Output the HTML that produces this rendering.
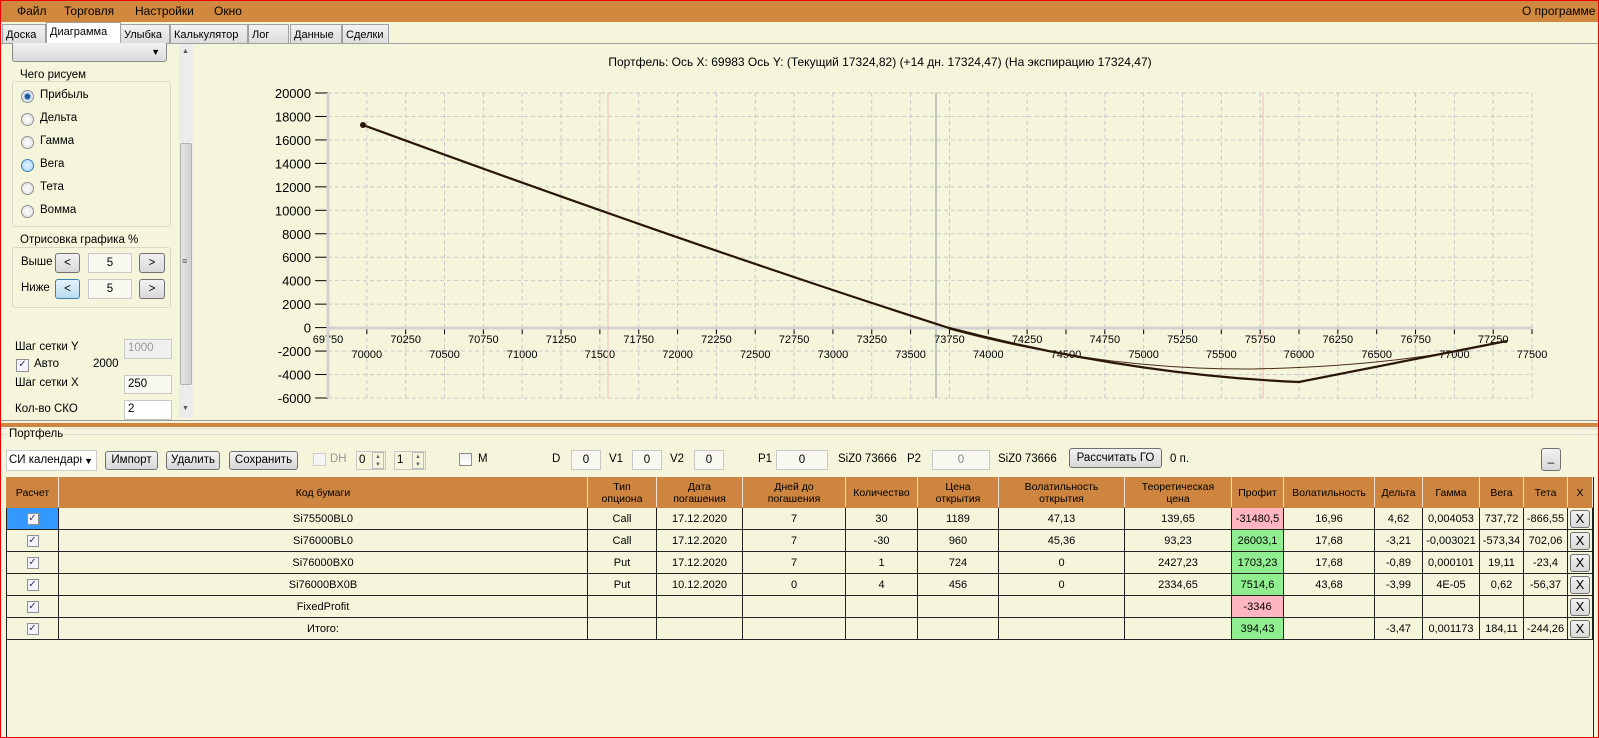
<!DOCTYPE html>
<html><head><meta charset="utf-8">
<style>
*{box-sizing:border-box;margin:0;padding:0}
body{width:1599px;height:738px;overflow:hidden;background:#f5f5dc;font-family:"Liberation Sans",sans-serif;font-size:12px;color:#000;position:relative}
.a{position:absolute;white-space:nowrap}
.menu{left:0;top:0;width:1599px;height:22px;background:#d0883f;border:1px solid #e00;border-bottom:none}
.menu span{position:absolute;top:3px;font-size:12px;white-space:nowrap}
.frame{left:0;top:0;width:1599px;height:738px;border:1px solid #e00;border-top:none;pointer-events:none}
.tab{top:24px;height:19px;background:linear-gradient(#f2f2f2,#dcdcdc);border:1px solid #a0a0a0;border-bottom:none;font-size:11px;padding:4px 0 0 3px;overflow:hidden}
.tab.sel{top:22px;height:22px;background:#fff;padding-top:3px}
.grp{border:1px solid #d8d8c8;border-radius:3px}
.lg{background:#f5f5dc;padding:0 2px;font-size:11.5px}
.rad{width:13px;height:13px;border-radius:50%;border:1px solid #8e8f8f;background:radial-gradient(#fff,#ddd)}
.btn{border:1px solid #707070;border-radius:3px;background:linear-gradient(#f2f2f2,#d8d8d8);text-align:center;font-size:11.5px}
.tb{border:1px solid #c8c8c8;background:#f8f8f0;text-align:center;font-size:11.5px}
.chk{width:13px;height:13px;border:1px solid #8e8f8f;background:linear-gradient(#eee,#fff)}
table{border-collapse:collapse;table-layout:fixed;font-size:11px}
td{border:1px solid #222;height:22px;text-align:center;white-space:nowrap;overflow:hidden;background:#f5f5dc}
th{background:#cd853f;font-weight:normal;height:30px;border:1px solid #cd853f;border-right:1px solid #f0e0d0;font-size:10.5px;line-height:12px;overflow:hidden;white-space:nowrap}
.pk{background:#ffb6c1}.gr{background:#90ee90}
.cb{display:inline-block;width:12px;height:12px;border:1px solid #8e8f8f;background:#f4f4ff;font-size:10px;line-height:10px;color:#335}
.x{display:inline-block;width:20px;height:18px;border:1px solid #707070;border-radius:3px;background:linear-gradient(#f2f2f2,#d8d8d8);line-height:16px;font-size:13px}
.sm{font-size:11.5px}
</style></head><body>
<div class="a menu"><span style="left:16px">Файл</span><span style="left:63px">Торговля</span><span style="left:134px">Настройки</span><span style="left:213px">Окно</span><span style="left:1521px">О программе</span></div>
<div class="a tab" style="left:2px;width:44px">Доска</div>
<div class="a tab sel" style="left:46px;width:75px">Диаграмма</div>
<div class="a tab" style="left:120px;width:50px">Улыбка</div>
<div class="a tab" style="left:170px;width:78px">Калькулятор</div>
<div class="a tab" style="left:248px;width:41px">Лог</div>
<div class="a tab" style="left:290px;width:52px">Данные</div>
<div class="a tab" style="left:342px;width:47px">Сделки</div>
<div class="a" style="left:1px;top:43px;width:1597px;height:1px;background:#a0a0a0"></div>

<!-- left panel -->
<div class="a" style="left:12px;top:43px;width:155px;height:19px;border:1px solid #888;border-top:none;border-radius:0 0 3px 3px;background:linear-gradient(#f2f2f2,#dadada)"><span class="a" style="right:6px;top:4px;font-size:9px">▼</span></div>
<div class="a grp" style="left:12px;top:81px;width:159px;height:146px"></div>
<div class="a lg" style="left:18px;top:69px">Чего рисуем</div>
<div class="a rad" style="left:21px;top:90px;background:radial-gradient(#1e5a9a 30%,#cde 45%,#fff)"></div><div class="a sm" style="left:40px;top:89px">Прибыль</div>
<div class="a rad" style="left:21px;top:113px"></div><div class="a sm" style="left:40px;top:112px">Дельта</div>
<div class="a rad" style="left:21px;top:136px"></div><div class="a sm" style="left:40px;top:135px">Гамма</div>
<div class="a rad" style="left:21px;top:159px;border-color:#3c7fb1;background:radial-gradient(#e0f0ff,#a9d8f8)"></div><div class="a sm" style="left:40px;top:158px">Вега</div>
<div class="a rad" style="left:21px;top:182px"></div><div class="a sm" style="left:40px;top:181px">Тета</div>
<div class="a rad" style="left:21px;top:205px"></div><div class="a sm" style="left:40px;top:204px">Вомма</div>
<div class="a grp" style="left:12px;top:247px;width:159px;height:61px"></div>
<div class="a lg" style="left:18px;top:234px">Отрисовка графика %</div>
<div class="a sm" style="left:21px;top:256px">Выше</div>
<div class="a btn" style="left:55px;top:253px;width:25px;height:20px;line-height:18px">&lt;</div>
<div class="a tb" style="left:88px;top:253px;width:44px;height:20px;line-height:18px">5</div>
<div class="a btn" style="left:139px;top:253px;width:26px;height:20px;line-height:18px">&gt;</div>
<div class="a sm" style="left:21px;top:282px">Ниже</div>
<div class="a btn" style="left:55px;top:279px;width:25px;height:20px;line-height:18px;border-color:#3c7fb1;background:linear-gradient(#e5f4fc,#b8dcf2)">&lt;</div>
<div class="a tb" style="left:88px;top:279px;width:44px;height:20px;line-height:18px">5</div>
<div class="a btn" style="left:139px;top:279px;width:26px;height:20px;line-height:18px">&gt;</div>
<div class="a sm" style="left:15px;top:341px">Шаг сетки Y</div>
<div class="a tb" style="left:124px;top:339px;width:48px;height:20px;text-align:left;padding:2px 3px;color:#999;background:#f0f0f0">1000</div>
<div class="a chk" style="left:16px;top:359px;background:#f4f4ff;font-size:10px;line-height:10px;color:#335;text-align:center">✓</div>
<div class="a sm" style="left:34px;top:358px">Авто</div><div class="a sm" style="left:93px;top:358px">2000</div>
<div class="a sm" style="left:15px;top:377px">Шаг сетки X</div>
<div class="a tb" style="left:124px;top:375px;width:48px;height:19px;text-align:left;padding:2px 3px">250</div>
<div class="a sm" style="left:15px;top:403px">Кол-во СКО</div>
<div class="a tb" style="left:124px;top:400px;width:48px;height:20px;text-align:left;padding:2px 3px;background:#fff">2</div>
<div class="a" style="left:179px;top:44px;width:14px;height:374px;background:#ececec"></div>
<div class="a" style="left:180px;top:143px;width:12px;height:242px;background:linear-gradient(90deg,#e4e4e4,#d0d0d0);border:1px solid #b0b0b0;border-radius:2px"></div>
<div class="a" style="left:182px;top:48px;font-size:7px;color:#555">▲</div>
<div class="a" style="left:182px;top:405px;font-size:7px;color:#555">▼</div>
<div class="a" style="left:182px;top:256px;font-size:9px;color:#555">≡</div>

<!-- chart -->
<svg class="a" style="left:0;top:0" width="1599" height="430" font-family="Liberation Sans,sans-serif">
<text x="880" y="66" font-size="12" text-anchor="middle">Портфель: Ось X: 69983 Ось Y:  (Текущий 17324,82)  (+14 дн. 17324,47)  (На экспирацию 17324,47)</text>
<g stroke="#c8c8c8" stroke-dasharray="4,3" stroke-width="1" id="g"></g>
<g id="gl"></g>
<line x1="608" y1="93" x2="608" y2="398" stroke="#f4b8b8"/>
<line x1="1263" y1="93" x2="1263" y2="398" stroke="#f4b8b8"/>
<line x1="936" y1="93" x2="936" y2="398" stroke="#8a9a9a"/>
<line x1="328" y1="328" x2="1532" y2="328" stroke="#d2d2d2" stroke-width="3"/>
<line x1="328" y1="93" x2="328" y2="398" stroke="#d2d2d2" stroke-width="3"/>
<path d="M949,329 Q1100,370 1253,369 Q1400,366 1507,341" fill="none" stroke="#4a2c16" stroke-width="1"/>
<path d="M363,125 Q690,245 949,328 Q1130,375 1299,382 L1507,341" fill="none" stroke="#2a1608" stroke-width="2.2"/>
<circle cx="363" cy="125" r="3" fill="#2a1608"/>
</svg>
<script>
(function(){var g=document.getElementById('g'),gl=document.getElementById('gl'),s='',t='';
for(var k=0;k<=31;k++){var x=328+k*38.84;s+='<line x1="'+x+'" y1="93" x2="'+x+'" y2="398"/>';
t+='<line x1="'+x+'" y1="329" x2="'+x+'" y2="334" stroke="#000"/>';
var v=69750+250*k;t+='<text x="'+x+'" y="'+(k%2?358:343)+'" font-size="11" text-anchor="middle">'+v+'</text>';}
for(var j=0;j<=13;j++){var y=93+j*23.46;s+='<line x1="328" y1="'+y+'" x2="1532" y2="'+y+'"/>';
t+='<line x1="315" y1="'+y+'" x2="328" y2="'+y+'" stroke="#000"/>';
t+='<text x="311" y="'+(y+5)+'" font-size="13" text-anchor="end">'+(20000-2000*j)+'</text>';}
g.innerHTML=s;gl.innerHTML=t;})();
</script>

<!-- splitter -->
<div class="a" style="left:1px;top:420px;width:1597px;height:1px;background:#999"></div>
<div class="a" style="left:1px;top:423px;width:1597px;height:4px;background:#cd853f"></div>
<div class="a" style="left:1px;top:428px;width:1597px;height:1px;background:#ddd"></div>
<div class="a" style="left:1px;top:434px;width:1597px;height:1px;background:#dcdcdc"></div>
<div class="a lg" style="left:7px;top:428px">Портфель</div>

<!-- toolbar -->
<div class="a" style="left:6px;top:450px;width:91px;height:21px;border:1px solid #ccc;background:#fff;padding:3px 2px;overflow:hidden;font-size:11.5px">СИ календарн<span class="a" style="right:3px;top:5px;font-size:9px;background:#fff;padding-left:2px">▼</span></div>
<div class="a btn" style="left:105px;top:451px;width:53px;height:19px;line-height:17px">Импорт</div>
<div class="a btn" style="left:166px;top:451px;width:54px;height:19px;line-height:17px">Удалить</div>
<div class="a btn" style="left:229px;top:451px;width:69px;height:19px;line-height:17px">Сохранить</div>
<div class="a chk" style="left:313px;top:453px;border-color:#ccc;background:#f6f6f6"></div>
<div class="a sm" style="left:330px;top:453px;color:#999">DH</div>
<div class="a tb" style="left:356px;top:451px;width:30px;height:19px;text-align:left;padding:2px 2px;background:#f5f5dc">0</div>
<div class="a" style="left:372px;top:452px;width:12px;height:17px;border:1px solid #bbb;font-size:6px;line-height:8px;text-align:center;color:#666">▲<br>▼</div>
<div class="a tb" style="left:394px;top:451px;width:32px;height:19px;text-align:left;padding:2px 2px;background:#f5f5dc">1</div>
<div class="a" style="left:412px;top:452px;width:12px;height:17px;border:1px solid #bbb;font-size:6px;line-height:8px;text-align:center;color:#666">▲<br>▼</div>
<div class="a chk" style="left:459px;top:453px"></div>
<div class="a sm" style="left:478px;top:453px">M</div>
<div class="a sm" style="left:552px;top:453px">D</div>
<div class="a tb" style="left:571px;top:450px;width:30px;height:20px;line-height:18px">0</div>
<div class="a sm" style="left:609px;top:453px">V1</div>
<div class="a tb" style="left:632px;top:450px;width:30px;height:20px;line-height:18px">0</div>
<div class="a sm" style="left:670px;top:453px">V2</div>
<div class="a tb" style="left:694px;top:450px;width:30px;height:20px;line-height:18px">0</div>
<div class="a sm" style="left:758px;top:453px">P1</div>
<div class="a tb" style="left:776px;top:450px;width:52px;height:20px;line-height:18px">0</div>
<div class="a sm" style="left:838px;top:453px">SiZ0 73666</div>
<div class="a sm" style="left:907px;top:453px">P2</div>
<div class="a tb" style="left:932px;top:450px;width:58px;height:20px;line-height:18px;color:#888">0</div>
<div class="a sm" style="left:998px;top:453px">SiZ0 73666</div>
<div class="a btn" style="left:1069px;top:448px;width:93px;height:20px;line-height:18px">Рассчитать ГО</div>
<div class="a sm" style="left:1170px;top:453px">0 п.</div>
<div class="a btn" style="left:1541px;top:448px;width:20px;height:23px;line-height:18px">_</div>

<!-- table -->
<div class="a" style="left:6px;top:477px;width:1588px;height:260px;border:1px solid #222;border-bottom:none"></div>
<table class="a" style="left:6px;top:477px">
<colgroup><col style="width:52px"><col style="width:529px"><col style="width:69px"><col style="width:86px"><col style="width:103px"><col style="width:72px"><col style="width:81px"><col style="width:126px"><col style="width:107px"><col style="width:52px"><col style="width:91px"><col style="width:48px"><col style="width:57px"><col style="width:44px"><col style="width:44px"><col style="width:25px"></colgroup>
<tr><th>Расчет</th><th>Код бумаги</th><th>Тип<br>опциона</th><th>Дата<br>погашения</th><th>Дней до<br>погашения</th><th>Количество</th><th>Цена<br>открытия</th><th>Волатильность<br>открытия</th><th>Теоретическая<br>цена</th><th>Профит</th><th>Волатильность</th><th>Дельта</th><th>Гамма</th><th>Вега</th><th>Тета</th><th>X</th></tr>
<tr><td style="background:#3399ff"><span class="cb">✓</span></td><td>Si75500BL0</td><td>Call</td><td>17.12.2020</td><td>7</td><td>30</td><td>1189</td><td>47,13</td><td>139,65</td><td class="pk">-31480,5</td><td>16,96</td><td>4,62</td><td>0,004053</td><td>737,72</td><td>-866,55</td><td><span class="x">X</span></td></tr>
<tr><td><span class="cb">✓</span></td><td>Si76000BL0</td><td>Call</td><td>17.12.2020</td><td>7</td><td>-30</td><td>960</td><td>45,36</td><td>93,23</td><td class="gr">26003,1</td><td>17,68</td><td>-3,21</td><td>-0,003021</td><td>-573,34</td><td>702,06</td><td><span class="x">X</span></td></tr>
<tr><td><span class="cb">✓</span></td><td>Si76000BX0</td><td>Put</td><td>17.12.2020</td><td>7</td><td>1</td><td>724</td><td>0</td><td>2427,23</td><td class="gr">1703,23</td><td>17,68</td><td>-0,89</td><td>0,000101</td><td>19,11</td><td>-23,4</td><td><span class="x">X</span></td></tr>
<tr><td><span class="cb">✓</span></td><td>Si76000BX0B</td><td>Put</td><td>10.12.2020</td><td>0</td><td>4</td><td>456</td><td>0</td><td>2334,65</td><td class="gr">7514,6</td><td>43,68</td><td>-3,99</td><td>4E-05</td><td>0,62</td><td>-56,37</td><td><span class="x">X</span></td></tr>
<tr><td><span class="cb">✓</span></td><td>FixedProfit</td><td></td><td></td><td></td><td></td><td></td><td></td><td></td><td class="pk">-3346</td><td></td><td></td><td></td><td></td><td></td><td><span class="x">X</span></td></tr>
<tr><td><span class="cb">✓</span></td><td>Итого:</td><td></td><td></td><td></td><td></td><td></td><td></td><td></td><td class="gr">394,43</td><td></td><td>-3,47</td><td>0,001173</td><td>184,11</td><td>-244,26</td><td><span class="x">X</span></td></tr>
</table>
<div class="a frame"></div>
</body></html>
